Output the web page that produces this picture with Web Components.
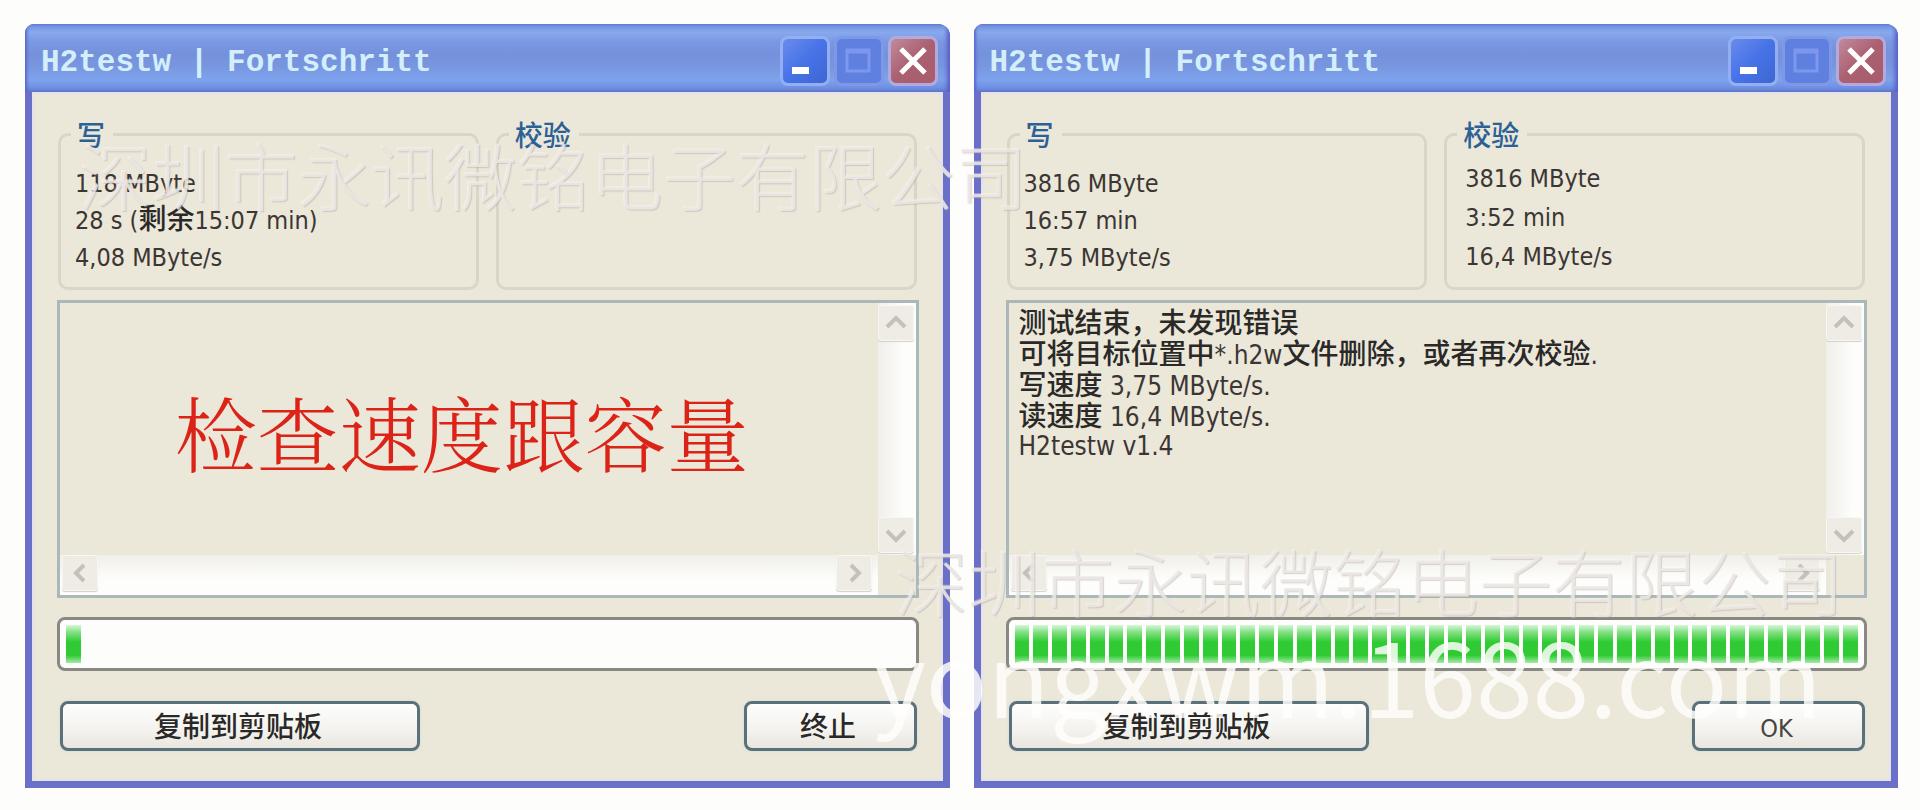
<!DOCTYPE html>
<html lang="zh-CN">
<head>
<meta charset="utf-8">
<title>H2testw | Fortschritt</title>
<style>
  body {
    margin: 0;
    background: #fdfdfc;
    font-family: "DejaVu Sans Condensed", "Noto Sans CJK SC", sans-serif;
    font-size: 25px;
    color: #3b3634;
    text-autospace: no-autospace;
  }
</style>
</head>
<body>
<photo-stage>
  <xp-window caption="H2testw | Fortschritt">
    <xp-group caption="写" slot="groups">
      <xp-line>118 MByte</xp-line>
      <xp-line>28 s (<xp-han>剩余</xp-han>15:07 min)</xp-line>
      <xp-line>4,08 MByte/s</xp-line>
    </xp-group>
    <xp-group caption="校验" slot="groups"></xp-group>
    <xp-log slot="log"><xp-note>检查速度跟容量</xp-note></xp-log>
    <xp-progress slot="progress" value="1" max="45"></xp-progress>
    <xp-button slot="copy"><xp-han>复制到剪贴板</xp-han></xp-button>
    <xp-button slot="action"><xp-han>终止</xp-han></xp-button>
  </xp-window>
  <xp-window caption="H2testw | Fortschritt">
    <xp-group caption="写" slot="groups">
      <xp-line>3816 MByte</xp-line>
      <xp-line>16:57 min</xp-line>
      <xp-line>3,75 MByte/s</xp-line>
    </xp-group>
    <xp-group caption="校验" slot="groups" raised>
      <xp-line>3816 MByte</xp-line>
      <xp-line>3:52 min</xp-line>
      <xp-line>16,4 MByte/s</xp-line>
    </xp-group>
    <xp-log slot="log">
      <xp-line><xp-han>测试结束，未发现错误</xp-han></xp-line>
      <xp-line><xp-han>可将目标位置中</xp-han>*.h2w<xp-han>文件删除，或者再次校验</xp-han>.</xp-line>
      <xp-line><xp-han>写速度</xp-han> 3,75 MByte/s.</xp-line>
      <xp-line><xp-han>读速度</xp-han> 16,4 MByte/s.</xp-line>
      <xp-line>H2testw v1.4</xp-line>
    </xp-log>
    <xp-progress slot="progress" value="45" max="45"></xp-progress>
    <xp-button slot="copy"><xp-han>复制到剪贴板</xp-han></xp-button>
    <xp-button slot="action">OK</xp-button>
  </xp-window>
  <water-mark slot="marks" class="first">深圳市永讯微铭电子有限公司</water-mark>
  <water-mark slot="marks" class="second">深圳市永讯微铭电子有限公司</water-mark>
  <water-mark slot="marks" class="site" solid>yongxwm.1688.com</water-mark>
</photo-stage>

<script>
function define(name, html, setup) {
  const template = document.createElement('template');
  template.innerHTML = html.trim();
  customElements.define(name, class extends HTMLElement {
    constructor() {
      super();
      const root = this.attachShadow({ mode: 'open' });
      root.append(template.content.cloneNode(true));
    }
    connectedCallback() {
      if (setup) setup(this, this.shadowRoot);
    }
  });
}

define('photo-stage', `
  <style>
    :host { display: block; position: relative; overflow: hidden; }
    .row { display: grid; grid-template-columns: 1fr 1fr; gap: 24px; padding: 24px 22px 22px 25px; }
    ::slotted(water-mark) { position: absolute; }
    ::slotted(.first) { left: 79px; top: 128px; }
    ::slotted(.second) { left: 895px; top: 534px; }
    ::slotted(.site) { left: 873px; top: 614px; }
  </style>
  <div class="row"><slot></slot></div>
  <slot name="marks"></slot>`);

define('water-mark', `
  <style>
    :host {
      display: block; pointer-events: none; white-space: nowrap;
      font: 300 73px/90px "Noto Sans CJK SC", sans-serif;
      color: rgba(239, 234, 230, .8);
      text-shadow: 1px 1px 1px rgba(170, 162, 160, .45), -1px -1px 0 rgba(255, 255, 255, .3);
    }
    :host([solid]) {
      font: 400 102px/120px "Noto Sans CJK SC", "Noto Sans", sans-serif;
      color: rgba(255, 254, 252, .84);
      text-shadow: none;
    }
  </style>
  <slot></slot>`);

define('xp-window', `
  <style>
    :host {
      display: flex; flex-direction: column; min-width: 0;
      background: #6a70c8; border-radius: 9px 12px 0 0; overflow: hidden;
    }
    header {
      display: flex; align-items: center; gap: 4px; box-sizing: border-box;
      height: 68px; padding: 6px 12px 0 16px;
      background: linear-gradient(#6d8cdc 0, #88a9ee 8px, #7a98e2 18px, #7691dc 30px, #7896e0 42px, #7ea2ec 56px, #6f91e4 63px, #667fcf 68px);
      box-shadow: inset 3px 0 3px -1px #5a66cc, inset -4px 0 4px -1px #5a5cc8;
    }
    h1 {
      flex: 1; margin: 0; padding-top: 4px; color: #d3effb; white-space: nowrap;
      font: bold 31px/40px "Liberation Mono", monospace;
    }
    button {
      width: 50px; height: 50px; padding: 0; box-sizing: border-box;
      border: 3px solid #93aff2; border-radius: 8px;
      background: linear-gradient(135deg, #6a8bea, #4673e8 50%, #3f66d2);
    }
    button:disabled { border-color: #7c98e6; background: #6080e0; }
    button.close { border-color: #b3a9dd; background: linear-gradient(135deg, #c08a9c, #ab6071 50%, #a85c6c); }
    svg { display: block; width: 44px; height: 44px; }
    main {
      flex: 1; margin: 0 7px 7px; padding: 26px 24px 30px 25px;
      background: #ebe7d9; box-shadow: inset 0 0 2px 2px #e3e2ec;
      display: flex; flex-direction: column;
    }
    .groups { display: grid; grid-template-columns: 1fr 1fr; gap: 17px; margin-bottom: 10px; padding: 0 2px 0 1px; }
    .log { display: grid; flex: 1; margin-bottom: 19px; }
    .progress { margin-bottom: 30px; }
    footer { display: flex; justify-content: space-between; padding: 0 2px 0 3px; }
    slot[name=copy]::slotted(*) { width: 360px; }
    slot[name=action]::slotted(*) { width: 173px; }
  </style>
  <header>
    <h1></h1>
    <button aria-label="最小化"><svg viewBox="0 0 44 44"><rect x="9" y="28" width="17" height="7" fill="#fff"/></svg></button>
    <button aria-label="最大化" disabled><svg viewBox="0 0 44 44"><path d="M10 12h22v20H10z" fill="none" stroke="#7d97ee" stroke-width="3"/><path d="M9 12h24" stroke="#7d97ee" stroke-width="5"/></svg></button>
    <button class="close" aria-label="关闭"><svg viewBox="0 0 44 44"><path d="M10 10l24 24M34 10L10 34" stroke="#fff" stroke-width="5"/></svg></button>
  </header>
  <main>
    <div class="groups"><slot name="groups"></slot></div>
    <div class="log"><slot name="log"></slot></div>
    <div class="progress"><slot name="progress"></slot></div>
    <footer><slot name="copy"></slot><slot name="action"></slot></footer>
  </main>`, (el, root) => {
    root.querySelector('h1').textContent = el.getAttribute('caption');
  });

define('xp-group', `
  <style>
    :host { display: grid; min-width: 0; --line: 37px; }
    :host([raised]) { --line: 39px; }
    fieldset {
      margin: 0; min-width: 0; min-height: 172px; box-sizing: border-box;
      border: 3px solid #d9d6c9; border-radius: 10px; padding: 15px 14px 10px;
    }
    :host([raised]) fieldset { padding-top: 9px; padding-left: 18px; }
    legend {
      margin-left: -4px; padding: 0 8px 0 6px; color: #2c6196;
      font: 500 28px/32px "Noto Sans CJK SC", sans-serif;
    }
    :host([raised]) legend { margin-left: -8px; }
  </style>
  <fieldset><legend></legend><slot></slot></fieldset>`, (el, root) => {
    root.querySelector('legend').textContent = el.getAttribute('caption');
  });

define('xp-line', `
  <style>:host { display: block; height: var(--line); line-height: var(--line); white-space: nowrap; }</style>
  <slot></slot>`);

define('xp-han', '<style>:host { display: inline; font: 500 28px/1 "Noto Sans CJK SC", sans-serif; color: #2a2927; }</style><slot></slot>');

define('xp-note', `
  <style>
    :host {
      display: block; margin: auto; white-space: nowrap; color: #dc2318;
      font: 300 82px/96px "Noto Serif CJK SC", "Noto Sans CJK SC", serif;
    }
  </style>
  <slot></slot>`);

define('xp-log', `
  <style>
    :host {
      display: grid; grid-template-columns: 1fr 38px; grid-template-rows: 1fr 40px;
      min-height: 298px; box-sizing: border-box; border: 3px solid #aab8b9; --line: 31px;
      font-size: 26px;
    }
    .text { display: flex; flex-direction: column; padding: 4px 24px 0 10px; min-width: 0; }
    .bar { display: flex; justify-content: space-between; }
    .v { flex-direction: column; padding: 2px 2px 2px 0; background: linear-gradient(90deg, #f0efea, #fdfdfb 70%); }
    .h { padding: 0 6px 2px 2px; background: linear-gradient(#f0efe9, #fdfdfb 60%); }
    button {
      width: 36px; height: 36px; padding: 0; box-sizing: border-box;
      border: 1px solid #f8f7f3; border-radius: 3px; background: #eeece5; box-shadow: 0 1px 1px #d2d0c8;
    }
    svg { display: block; width: 34px; height: 34px; }
    path { fill: none; stroke: #c3c2b9; stroke-width: 4; }
  </style>
  <div class="text"><slot></slot></div>
  <div class="bar v">
    <button aria-label="向上"><svg viewBox="0 0 34 34"><path d="M8 21l9-9 9 9"/></svg></button>
    <button aria-label="向下"><svg viewBox="0 0 34 34"><path d="M8 13l9 9 9-9"/></svg></button>
  </div>
  <div class="bar h">
    <button aria-label="向左"><svg viewBox="0 0 34 34"><path d="M21 9l-8 8 8 8"/></svg></button>
    <button aria-label="向右"><svg viewBox="0 0 34 34"><path d="M14 9l8 8-8 8"/></svg></button>
  </div>`);

define('xp-progress', `
  <style>
    :host {
      display: grid; gap: 4px; height: 54px; box-sizing: border-box; padding: 5px 6px;
      border: 3px solid #8a8883; border-radius: 8px; background: #fdfdfc;
    }
    i { background: linear-gradient(#d8f6d8, #7fdf7f 20%, #30cb34 45%, #30cb34 80%, #a8eaa8); }
  </style>`, (el, root) => {
    const max = Number(el.getAttribute('max'));
    const value = Number(el.getAttribute('value'));
    el.style.gridTemplateColumns = 'repeat(' + max + ', 1fr)';
    el.setAttribute('role', 'progressbar');
    el.setAttribute('aria-valuenow', value);
    el.setAttribute('aria-valuemax', max);
    for (let n = 0; n < value; n++) root.append(document.createElement('i'));
  });

define('xp-button', `
  <style>
    :host { display: block; }
    button {
      display: block; width: 100%; height: 50px; box-sizing: border-box; padding: 6px 4px 0 0;
      border: 3px solid #5b7078; border-radius: 8px; color: #4a4445;
      background: linear-gradient(#fdfefd, #f3f2ee 60%, #e9e6df);
      box-shadow: 0 0 2px 1px #d8e2e2;
      font: 25px/38px "DejaVu Sans Condensed", sans-serif;
    }
  </style>
  <button><slot></slot></button>`);
</script>
</body>
</html>
